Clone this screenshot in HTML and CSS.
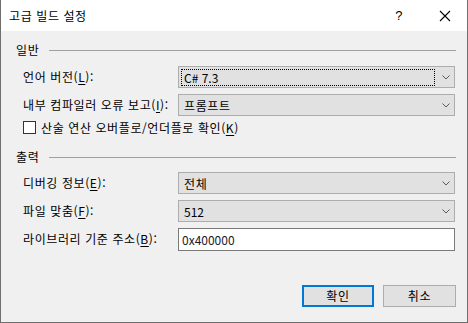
FILE: index.html
```html
<!DOCTYPE html>
<html lang="ko">

<head>
    <meta charset="UTF-8">
    <title>고급 빌드 설정</title>
    <link rel="stylesheet" href="styles.css">
</head>

<body>
    <div class="window">
        <div class="titlebar">
            <span class="title">고급 빌드 설정</span>
            <span class="help">?</span>
            <svg class="close" width="12" height="12" viewBox="0 0 12 12">
                <path d="M1 1L11 11M11 1L1 11" stroke="#000" stroke-width="1.1" fill="none" />
            </svg>
        </div>

        <div class="content">
            <div class="group-head"><span>일반</span><i class="rule"></i></div>
            <div class="fields">
                <label class="label">언어 버전(<u>L</u>):</label>
                <div class="combo">
                    <span class="value focused latin">C# 7.3</span>
                    <svg class="chev" width="8" height="5" viewBox="0 0 8 5"><path d="M0.5 0.5L4 4L7.5 0.5" stroke="#5a5a5a" fill="none" /></svg>
                </div>
                <label class="label">내부 컴파일러 오류 보고(<u>I</u>):</label>
                <div class="combo">
                    <span class="value">프롬프트</span>
                    <svg class="chev" width="8" height="5" viewBox="0 0 8 5"><path d="M0.5 0.5L4 4L7.5 0.5" stroke="#5a5a5a" fill="none" /></svg>
                </div>
            </div>
            <div class="check-row">
                <span class="box"></span>
                <span>산술 연산 오버플로/언더플로 확인(<u>K</u>)</span>
            </div>

            <div class="group-head second"><span>출력</span><i class="rule"></i></div>
            <div class="fields">
                <label class="label">디버깅 정보(<u>E</u>):</label>
                <div class="combo">
                    <span class="value">전체</span>
                    <svg class="chev" width="8" height="5" viewBox="0 0 8 5"><path d="M0.5 0.5L4 4L7.5 0.5" stroke="#5a5a5a" fill="none" /></svg>
                </div>
                <label class="label">파일 맞춤(<u>F</u>):</label>
                <div class="combo">
                    <span class="value latin">512</span>
                    <svg class="chev" width="8" height="5" viewBox="0 0 8 5"><path d="M0.5 0.5L4 4L7.5 0.5" stroke="#5a5a5a" fill="none" /></svg>
                </div>
                <label class="label">라이브러리 기준 주소(<u>B</u>):</label>
                <div class="textbox latin">0x400000</div>
            </div>

            <div class="buttons">
                <button class="btn default">확인</button>
                <button class="btn">취소</button>
            </div>
        </div>
    </div>
</body>

</html>
```

FILE: styles.css
```css
body {
    margin: 0;
    font-family: "Noto Sans CJK KR", "Noto Sans", sans-serif;
    font-size: 12px;
    letter-spacing: 0.6px;
    color: #000;
}

.latin {
    letter-spacing: 0;
}

.window {
    width: 468px;
    height: 323px;
    box-sizing: border-box;
    border: 1px solid #6e6e6e;
    border-top: none;
    background: #f0f0f0;
    display: flex;
    flex-direction: column;
}

.titlebar {
    height: 31px;
    background: #fff;
    display: flex;
    align-items: center;
    padding-left: 8px;
}

.title {
    flex: 1;
    line-height: 14px;
}

.help {
    font-family: "Liberation Sans", sans-serif;
    font-size: 13px;
    margin-right: 36px;
}

.close {
    margin-right: 16px;
}

.content {
    padding: 12px 11px 0 22px;
    display: flex;
    flex-direction: column;
}

.group-head {
    display: flex;
    align-items: center;
    height: 14px;
    line-height: 14px;
    margin-left: -7px;
    margin-bottom: 9px;
}

.group-head.second {
    margin-top: 15px;
    margin-bottom: 8px;
}

.rule {
    flex: 1;
    height: 1px;
    background: #a0a0a0;
    margin-left: 10px;
}

.fields {
    display: grid;
    grid-template-columns: 155px 277px;
    grid-auto-rows: 22px;
    row-gap: 6px;
    align-items: center;
}

.label {
    line-height: 14px;
}

u {
    text-underline-offset: 2px;
}

.combo {
    height: 22px;
    box-sizing: border-box;
    border: 1px solid #adadad;
    background: #e1e1e1;
    display: flex;
    align-items: center;
    padding: 0 4px 0 2px;
}

.value {
    flex: 1;
    line-height: 15px;
    padding-left: 2px;
    border: 1px solid transparent;
    margin-right: 7px;
}

.value.focused {
    border: 1px dotted #000;
}

.chev {
    display: block;
}

.textbox {
    height: 23px;
    box-sizing: border-box;
    border: 1px solid #7a7a7a;
    background: #fff;
    padding-left: 3px;
    line-height: 21px;
    color: #1a1a2a;
}

.fields:last-of-type {
    grid-template-rows: 22px 22px 23px;
}

.check-row {
    margin-top: 4px;
    height: 15px;
    display: flex;
    align-items: center;
    line-height: 14px;
}

.box {
    width: 13px;
    height: 13px;
    box-sizing: border-box;
    border: 1px solid #333;
    background: #fff;
    margin-right: 5px;
}

.buttons {
    display: flex;
    justify-content: flex-end;
    gap: 9px;
    margin-top: 35px;
}

.btn {
    width: 73px;
    height: 22px;
    box-sizing: border-box;
    border: 1px solid #adadad;
    background: #e1e1e1;
    font-family: inherit;
    font-size: 12px;
    letter-spacing: 0.6px;
    padding: 0;
    line-height: 14px;
}

.btn.default {
    width: 72px;
    border: 2px solid #0078d7;
}
```
